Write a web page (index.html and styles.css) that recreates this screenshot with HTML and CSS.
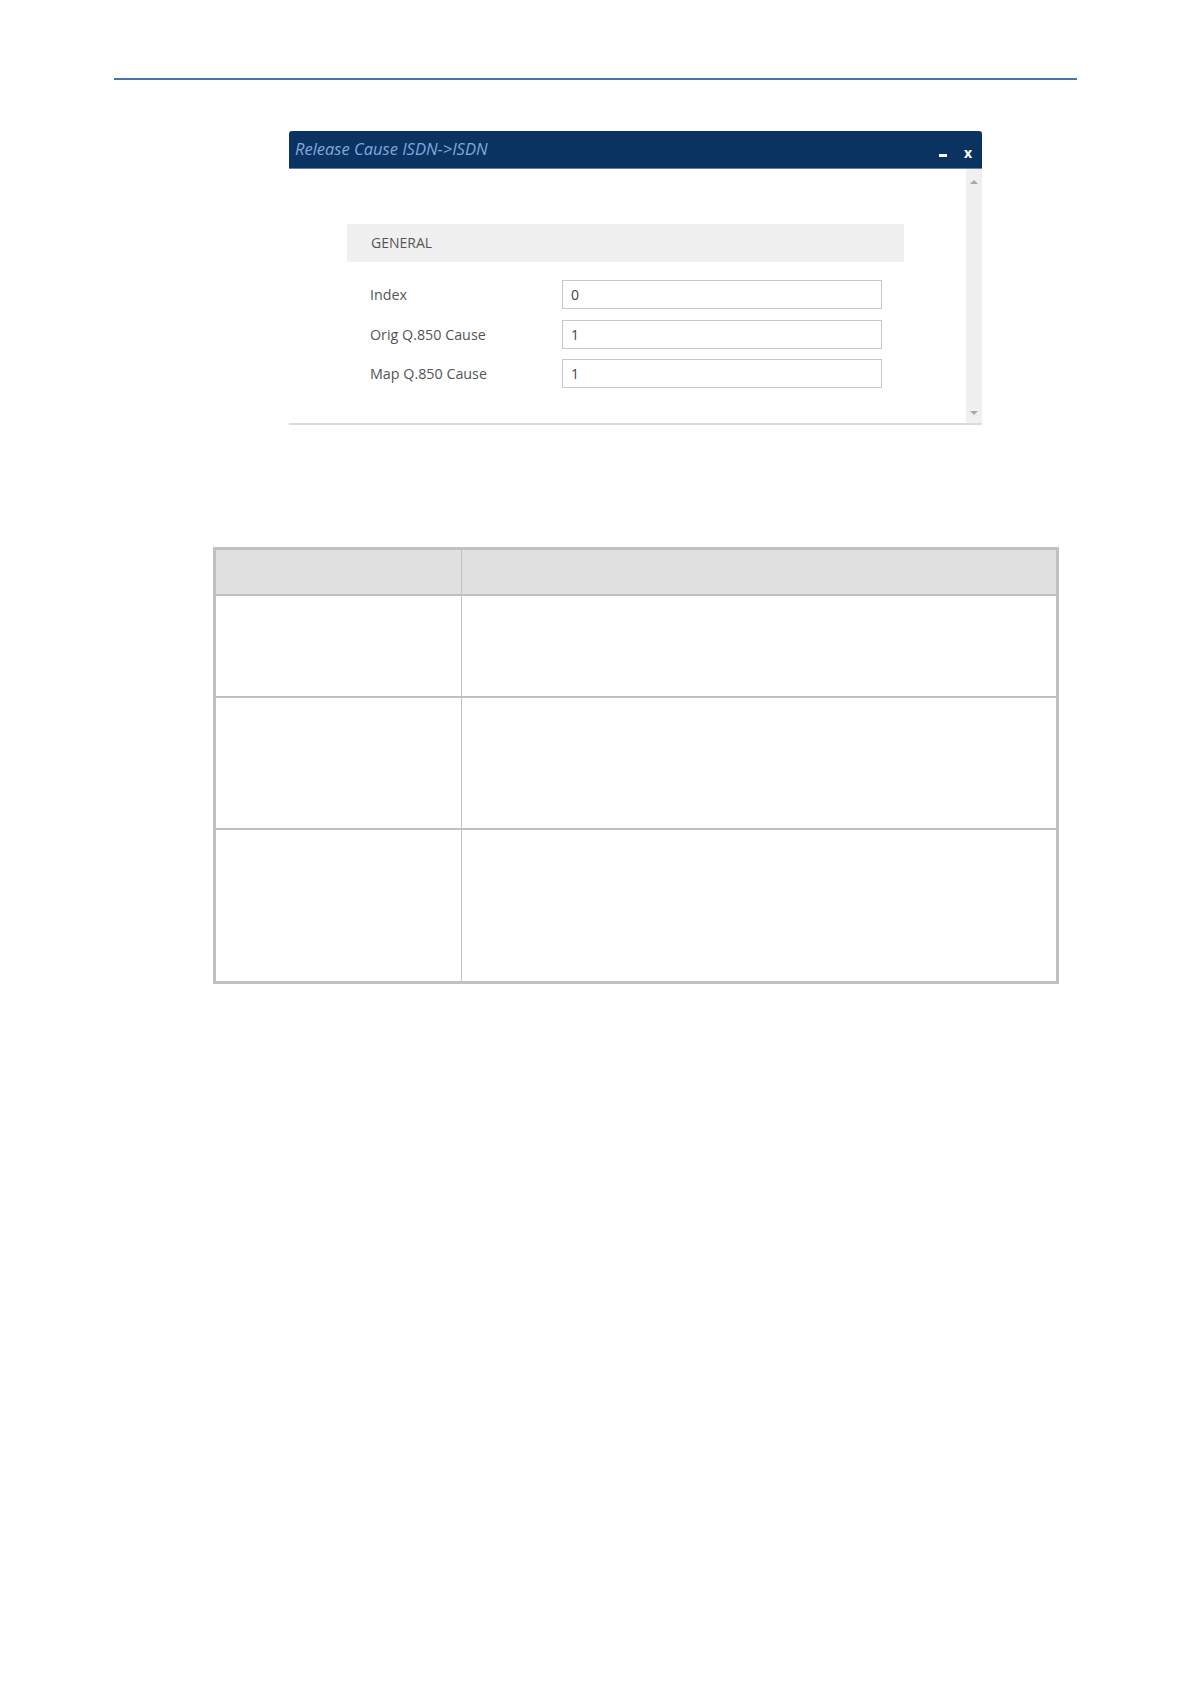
FILE: index.html
```html
<!DOCTYPE html>
<html>
<head>
<meta charset="utf-8">
<link rel="stylesheet" href="styles.css">
</head>
<body>
<div class="page">
  <div class="rule"></div>
  <div class="dialog">
    <div class="titlebar">
      <span class="title">Release Cause ISDN-&gt;ISDN</span>
      <span class="controls"><span class="min"></span><span class="close">x</span></span>
    </div>
    <div class="dbody">
      <div class="content">
        <div class="section">GENERAL</div>
        <div class="fields">
          <div class="field"><span class="label">Index</span><span class="input">0</span></div>
          <div class="field"><span class="label">Orig Q.850 Cause</span><span class="input">1</span></div>
          <div class="field"><span class="label">Map Q.850 Cause</span><span class="input">1</span></div>
        </div>
      </div>
      <div class="scrollbar"><span class="arrow up"></span><span class="arrow down"></span></div>
    </div>
  </div>
  <div class="grid">
    <div class="cell head first"></div><div class="cell head"></div>
    <div class="cell r1 first"></div><div class="cell r1"></div>
    <div class="cell r2 first"></div><div class="cell r2"></div>
    <div class="cell r3 first last"></div><div class="cell r3 last"></div>
  </div>
</div>
</body>
</html>
```
FILE: styles.css
```css
html, body {
  margin: 0;
  padding: 0;
  background: #ffffff;
  font-family: "Open Sans", "Liberation Sans", sans-serif;
}
.page {
  padding-top: 78px;
  height: 1606px;
}
.rule {
  margin-left: 114px;
  width: 963px;
  height: 2px;
  background: #4a72ab;
}
.dialog {
  margin-top: 51px;
  margin-left: 289px;
  width: 693px;
}
.titlebar {
  height: 37px;
  background: #0b3361;
  border-bottom: 1px solid #5b7fae;
  border-radius: 3px 3px 0 0;
  display: flex;
  align-items: center;
  justify-content: space-between;
  padding: 0 10px 0 6px;
}
.title {
  font-style: italic;
  font-size: 16.5px;
  color: #80a8dc;
  margin-top: -3px;
}
.controls {
  display: flex;
  align-items: center;
  gap: 17px;
  margin-top: 6px;
}
.min {
  width: 8px;
  height: 3px;
  background: #ffffff;
  margin-top: 6px;
}
.close {
  color: #ffffff;
  font-weight: bold;
  font-size: 14px;
  line-height: 14px;
}
.dbody {
  display: flex;
  height: 254px;
  border-bottom: 2px solid #dcdcdc;
  background: #ffffff;
}
.content {
  flex: 1;
  padding-top: 55px;
  padding-left: 58px;
}
.section {
  width: 557px;
  height: 38px;
  line-height: 38px;
  background: #f0f0f0;
  box-sizing: border-box;
  padding-left: 24px;
  font-size: 14px;
  color: #555555;
}
.fields {
  margin-top: 18px;
  padding-left: 23px;
  display: flex;
  flex-direction: column;
  gap: 10.5px;
}
.field {
  display: flex;
  align-items: center;
  height: 29px;
}
.label {
  width: 192px;
  font-size: 14.3px;
  color: #555555;
}
.input {
  width: 320px;
  height: 29px;
  box-sizing: border-box;
  border: 1px solid #c8c8c8;
  padding-left: 8px;
  font-size: 14px;
  line-height: 27px;
  color: #444444;
}
.scrollbar {
  width: 16px;
  background: #f0f0f0;
  display: flex;
  flex-direction: column;
  justify-content: space-between;
  align-items: center;
  padding: 11px 0 8px;
}
.arrow {
  width: 0;
  height: 0;
  border-left: 4px solid transparent;
  border-right: 4px solid transparent;
}
.arrow.up {
  border-bottom: 4px solid #a8a8a8;
}
.arrow.down {
  border-top: 4px solid #a8a8a8;
}
.grid {
  margin-top: 122px;
  margin-left: 213px;
  width: 846px;
  box-sizing: border-box;
  border: 3px solid #c0c0c0;
  display: grid;
  grid-template-columns: 246px 1fr;
  grid-template-rows: 46px 102px 132px 151px;
}
.cell {
  border-bottom: 2px solid #c0c0c0;
  background: #ffffff;
}
.cell.first {
  border-right: 1px solid #c0c0c0;
}
.cell.head {
  background: #e0e0e0;
}
.cell.last {
  border-bottom: none;
}
```
